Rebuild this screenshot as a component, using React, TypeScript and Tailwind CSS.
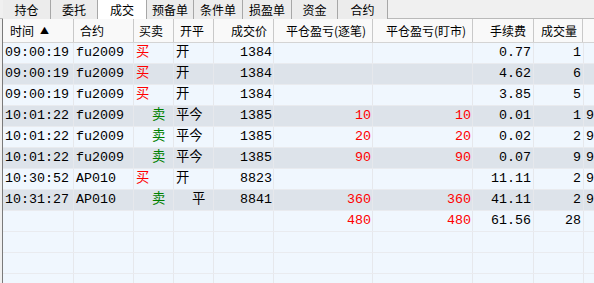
import React from 'react';

type Side = '买' | '卖';

interface Trade {
  time: string;
  code: string;
  side: Side;
  offset: string;
  price: string;
  pnlTrade: string;
  pnlMark: string;
  fee: string;
  qty: string;
  extra: string;
}

const trades: Trade[] = [
  { time: '09:00:19', code: 'fu2009', side: '买', offset: '开', price: '1384', pnlTrade: '', pnlMark: '', fee: '0.77', qty: '1', extra: '' },
  { time: '09:00:19', code: 'fu2009', side: '买', offset: '开', price: '1384', pnlTrade: '', pnlMark: '', fee: '4.62', qty: '6', extra: '' },
  { time: '09:00:19', code: 'fu2009', side: '买', offset: '开', price: '1384', pnlTrade: '', pnlMark: '', fee: '3.85', qty: '5', extra: '' },
  { time: '10:01:22', code: 'fu2009', side: '卖', offset: '平今', price: '1385', pnlTrade: '10', pnlMark: '10', fee: '0.01', qty: '1', extra: '9' },
  { time: '10:01:22', code: 'fu2009', side: '卖', offset: '平今', price: '1385', pnlTrade: '20', pnlMark: '20', fee: '0.02', qty: '2', extra: '9' },
  { time: '10:01:22', code: 'fu2009', side: '卖', offset: '平今', price: '1385', pnlTrade: '90', pnlMark: '90', fee: '0.07', qty: '9', extra: '9' },
  { time: '10:30:52', code: 'AP010', side: '买', offset: '开', price: '8823', pnlTrade: '', pnlMark: '', fee: '11.11', qty: '2', extra: '9' },
  { time: '10:31:27', code: 'AP010', side: '卖', offset: '  平', price: '8841', pnlTrade: '360', pnlMark: '360', fee: '41.11', qty: '2', extra: '9' },
];

const tabs = [
  { label: '持仓', w: 'w-[48px]' },
  { label: '委托', w: 'w-[47px]' },
  { label: '成交', w: 'w-[49px]', active: true },
  { label: '预备单', w: 'w-[47px]' },
  { label: '条件单', w: 'w-[49px]' },
  { label: '损盈单', w: 'w-[49px]' },
  { label: '资金', w: 'w-[46px]' },
  { label: '合约', w: 'w-[50px]' },
];

const cell = 'shrink-0 h-full border-r border-[#e6e8ec] flex items-center whitespace-pre overflow-hidden';
const head = 'shrink-0 h-full border-r border-[#c9c9c9] flex items-center whitespace-pre';

// column widths, separator included
const W = ['w-[71px]', 'w-[60px]', 'w-[40px]', 'w-[40px]', 'w-[60px]', 'w-[99px]', 'w-[100px]', 'w-[61px]', 'w-[50px]'];

const App: React.FC = () => {
  return (
    <div className="w-[594px] h-[283px] overflow-hidden bg-[#f0f0f0] flex flex-col font-['Noto_Sans_CJK_SC',sans-serif]">
      {/* Tabs */}
      <div className="h-[19px] shrink-0 flex pl-[3px] border-b border-[#b9b9b9] text-[12px] text-black">
        {tabs.map((t) => (
          <div
            key={t.label}
            className={`${t.w} h-[19px] flex items-center justify-center border-r border-[#a7a7a7] leading-none ${
              t.active ? 'bg-white -mb-px' : 'bg-[#ececec]'
            }`}
          >
            {t.label}
          </div>
        ))}
      </div>

      {/* Grid */}
      <div className="flex-1 flex pl-[2px]">
        <div className="flex-1 flex flex-col border-l border-[#7a7a7a] bg-[#f0f7fe] overflow-hidden">
          {/* Header */}
          <div className="h-[24px] shrink-0 flex bg-[#f9f9f9] border-b border-[#d4d4d4] text-[12px] text-black leading-none">
            <div className={`${head} ${W[0]} pl-[7px] gap-[6px]`}>
              时间<span className="text-[9px]">▲</span>
            </div>
            <div className={`${head} ${W[1]} pl-[6px]`}>合约</div>
            <div className={`${head} ${W[2]} pl-[5px]`}>买卖</div>
            <div className={`${head} ${W[3]} pl-[6px]`}>开平</div>
            <div className={`${head} ${W[4]} justify-end pr-[6px]`}>成交价</div>
            <div className={`${head} ${W[5]} justify-end pr-[6px]`}>平仓盈亏(逐笔)</div>
            <div className={`${head} ${W[6]} justify-end pr-[6px]`}>平仓盈亏(盯市)</div>
            <div className={`${head} ${W[7]} justify-end pr-[7px]`}>手续费</div>
            <div className={`${head} w-[49px] justify-end pr-[5px]`}>成交量</div>
            <div className="flex-1" />
          </div>

          {/* Rows */}
          <div className="flex flex-col font-['Liberation_Mono','Noto_Sans_CJK_SC',monospace] text-[13.33px] text-black leading-none">
            {trades.map((r, i) => (
              <div
                key={i}
                className={`h-[21px] shrink-0 flex border-b border-[#e9ebef] ${i % 2 === 1 ? 'bg-[#dde3ea]' : 'bg-[#f0f7fe]'}`}
              >
                <div className={`${cell} ${W[0]} pl-[2px]`}>{r.time}</div>
                <div className={`${cell} ${W[1]} pl-[2px]`}>{r.code}</div>
                <div className={`${cell} ${W[2]} pl-[2px] ${r.side === '买' ? 'text-[#ff0000]' : 'text-[#008000]'}`}>
                  {r.side === '买' ? '买' : '  卖'}
                </div>
                <div className={`${cell} ${W[3]} pl-[2px]`}>{r.offset}</div>
                <div className={`${cell} ${W[4]} justify-end pr-[1px]`}>{r.price}</div>
                <div className={`${cell} ${W[5]} justify-end pr-[1px] text-[#ff0000]`}>{r.pnlTrade}</div>
                <div className={`${cell} ${W[6]} justify-end pr-[1px] text-[#ff0000]`}>{r.pnlMark}</div>
                <div className={`${cell} ${W[7]} justify-end pr-[2px]`}>{r.fee}</div>
                <div className={`${cell} ${W[8]} justify-end pr-[2px]`}>{r.qty}</div>
                <div className="flex-1 h-full flex items-center pl-[2px] overflow-hidden">{r.extra}</div>
              </div>
            ))}

            {/* Totals */}
            <div className="h-[21px] shrink-0 flex border-b border-[#e9ebef] bg-[#f0f7fe]">
              <div className={`${cell} ${W[0]}`} />
              <div className={`${cell} ${W[1]}`} />
              <div className={`${cell} ${W[2]}`} />
              <div className={`${cell} ${W[3]}`} />
              <div className={`${cell} ${W[4]}`} />
              <div className={`${cell} ${W[5]} justify-end pr-[1px] text-[#ff0000]`}>480</div>
              <div className={`${cell} ${W[6]} justify-end pr-[1px] text-[#ff0000]`}>480</div>
              <div className={`${cell} ${W[7]} justify-end pr-[2px]`}>61.56</div>
              <div className={`${cell} ${W[8]} justify-end pr-[2px]`}>28</div>
              <div className="flex-1" />
            </div>

            {/* Empty rows */}
            {[0, 1, 2].map((k) => (
              <div key={k} className="h-[21px] shrink-0 flex border-b border-[#e9ebef] bg-[#f0f7fe]">
                {W.map((w, j) => (
                  <div key={j} className={`${cell} ${w}`} />
                ))}
                <div className="flex-1" />
              </div>
            ))}
          </div>
        </div>
      </div>
    </div>
  );
};

export default App;
